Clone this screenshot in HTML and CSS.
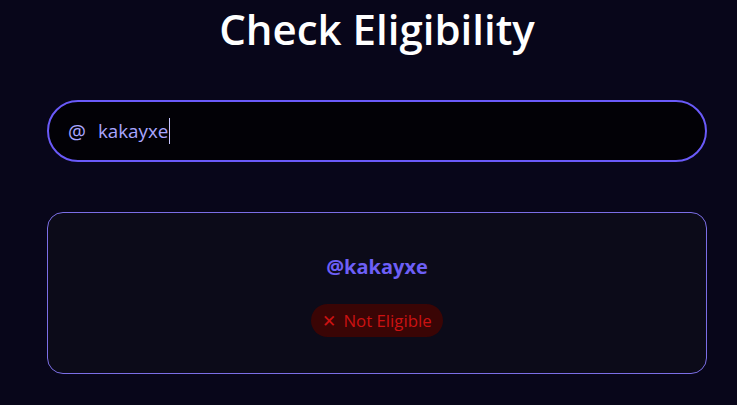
FILE: index.html
```html
<!DOCTYPE html>
<html lang="en">
<head>
<meta charset="utf-8">
<title>Check Eligibility</title>
<link rel="stylesheet" href="styles.css">
</head>
<body>
<main class="page">
  <h1 class="title">Check Eligibility</h1>
  <div class="search">
    <span class="at">@</span>
    <span class="value">kakayxe</span><span class="caret"></span>
  </div>
  <section class="card">
    <div class="handle">@kakayxe</div>
    <div class="badge"><span class="x">✕</span>Not Eligible</div>
  </section>
</main>
</body>
</html>
```

FILE: styles.css
```css
html, body {
  margin: 0;
  padding: 0;
  background: #08061a;
  height: 100%;
}
body {
  font-family: "Open Sans", "Noto Sans", sans-serif;
  overflow: hidden;
}
.page {
  padding: 0 30px 0 47px;
  display: flex;
  flex-direction: column;
}
.title {
  margin: 0;
  padding-top: 8px;
  line-height: 42px;
  text-align: center;
  color: #ffffff;
  font-size: 42px;
  font-weight: 600;
}
.search {
  margin-top: 50px;
  height: 58px;
  border: 2px solid #6a5af9;
  border-radius: 31px;
  background: #020106;
  display: flex;
  align-items: center;
  padding-left: 19px;
  color: #a9a6ff;
  font-size: 18.8px;
}
.at {
  margin-right: 12px;
  font-size: 20px;
}
.caret {
  display: inline-block;
  width: 1px;
  height: 26px;
  background: #c8c6ff;
  margin-left: 1px;
}
.card {
  margin-top: 50px;
  border: 1px solid #7b6ee6;
  border-radius: 16px;
  background: #0c0b19;
  display: flex;
  flex-direction: column;
  align-items: center;
  padding-top: 39px;
  box-sizing: border-box;
  height: 162px;
}
.handle {
  color: #6d5ff6;
  font-size: 20px;
  font-weight: 700;
  line-height: 30px;
}
.badge {
  margin-top: 22px;
  height: 33px;
  padding: 0 11px 0 11px;
  border-radius: 17px;
  background: #3a0505;
  color: #cc1212;
  font-size: 16.8px;
  display: flex;
  align-items: center;
  gap: 7px;
}
.x {
  font-size: 17px;
}
```
